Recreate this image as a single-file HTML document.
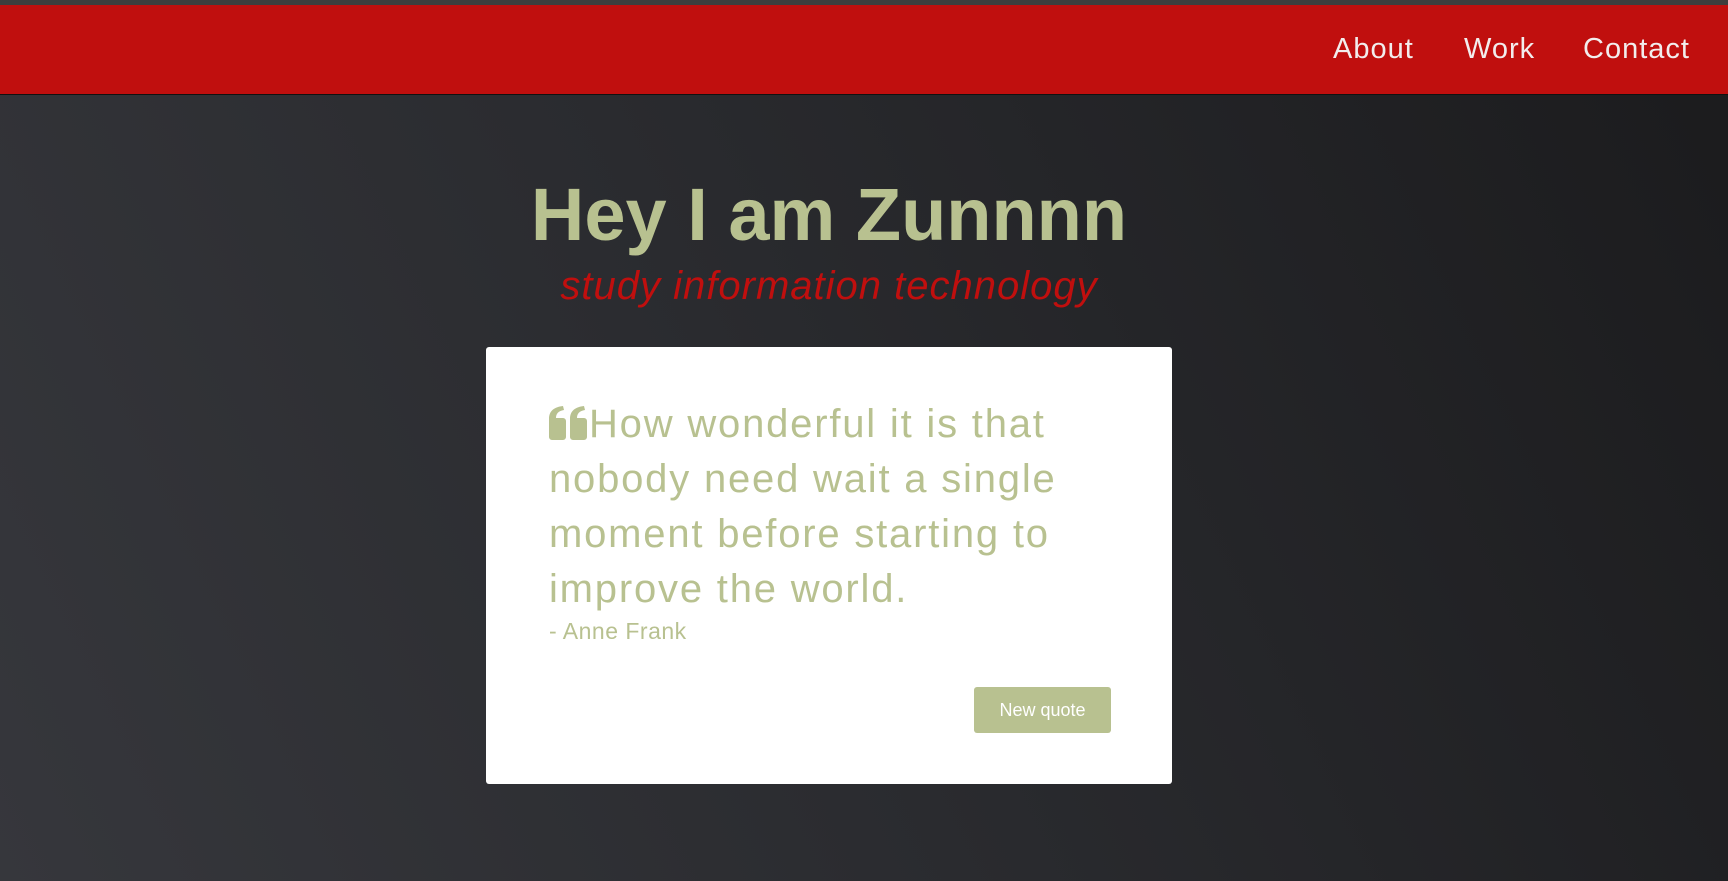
<!DOCTYPE html>
<html><head><style>
html,body{margin:0;padding:0}
body{width:1728px;height:881px;overflow:hidden;position:relative;font-family:"Liberation Sans",sans-serif;
background:linear-gradient(65deg,#36373c 0%,#2a2b2f 45%,#1b1b1d 100%);}
.top{position:absolute;left:0;top:0;width:1728px;height:5px;background:#3e3e3e}
.nav{position:absolute;left:0;top:5px;width:1728px;height:89px;background:#c00f0e;border-bottom:1px solid #111}
.nav a{position:absolute;top:28px;color:#f2eded;font-size:29px;text-decoration:none;letter-spacing:1px}
h1{position:absolute;left:0;width:1658px;text-align:center;top:172px;margin:0;font-size:74px;font-weight:bold;color:#b8c190}
.sub{position:absolute;left:0;width:1658px;text-align:center;top:264px;font-size:40px;font-style:italic;color:#c00f0e;letter-spacing:1px}
.card{position:absolute;left:486px;top:347px;width:686px;height:437px;background:#fff;border-radius:3px}
.q{position:absolute;left:63px;top:50px;width:620px;font-size:40px;line-height:55px;color:#b8c190;letter-spacing:1.8px;white-space:nowrap}
.au{position:absolute;left:63px;top:271px;font-size:23px;color:#b8c190;letter-spacing:0.5px}
.btn{position:absolute;left:488px;top:340px;width:137px;height:46px;background:#b8c190;border-radius:3px;color:#fff;font-size:18px;line-height:46px;text-align:center}
</style></head><body>
<div class="top"></div>
<div class="nav">
<a style="left:1333px">About</a>
<a style="left:1464px">Work</a>
<a style="left:1583px">Contact</a>
</div>
<h1>Hey I am Zunnnn</h1>
<div class="sub">study information technology</div>
<div class="card">
<div class="q"><svg width="40" height="34" viewBox="0 0 40 34" style="vertical-align:-3px"><path d="M0 13C0 5 5 1 14 0l1 4C9 5 7 8 7 12h7a3 3 0 0 1 3 3v16a3 3 0 0 1-3 3H3a3 3 0 0 1-3-3z M21 13C21 5 26 1 35 0l1 4c-6 1-8 4-8 8h7a3 3 0 0 1 3 3v16a3 3 0 0 1-3 3H24a3 3 0 0 1-3-3z" fill="#b8c190"/></svg>How wonderful it is that<br>nobody need wait a single<br>moment before starting to<br>improve the world.</div>
<div class="au">- Anne Frank</div>
<div class="btn">New quote</div>
</div>
</body></html>
